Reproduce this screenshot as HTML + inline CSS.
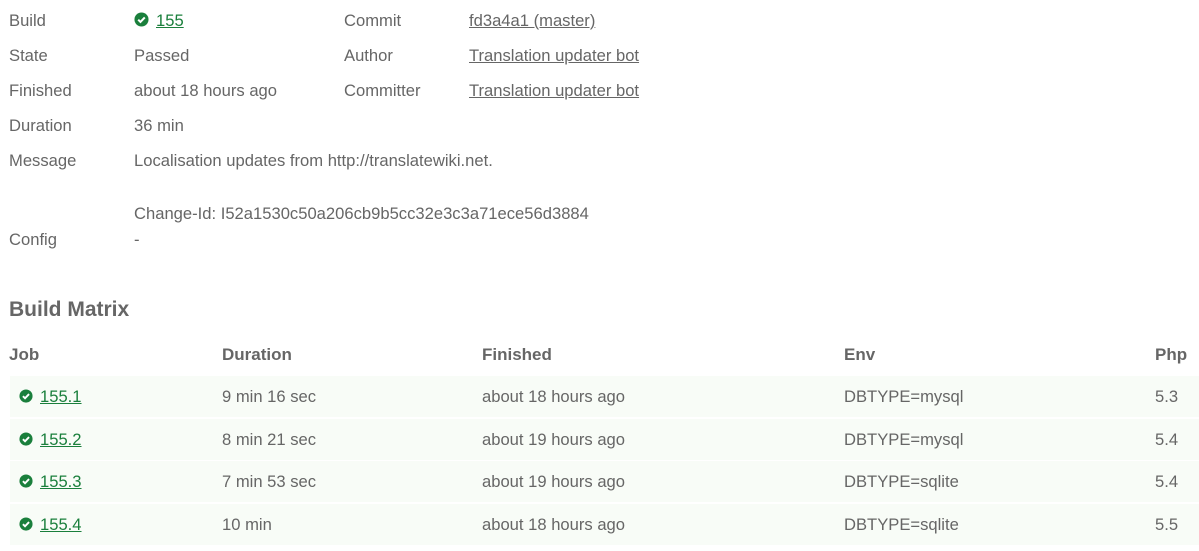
<!DOCTYPE html>
<html><head><meta charset="utf-8"><style>
body{margin:0;width:1199px;height:551px;background:#fff;font-family:"Liberation Sans",sans-serif;font-size:16.6px;color:#666;position:relative;overflow:hidden}
.t{position:absolute;line-height:18px;white-space:nowrap}
a{color:#666;text-decoration:underline}
a.g{color:#1a7f3c}
.b{font-weight:bold}
.row{position:absolute;left:10px;width:1189px;height:41px;background:#f8fcf7}
svg{position:absolute}
</style></head><body>
<div class="t" style="left:9px;top:12px">Build</div>
<svg style="left:134px;top:12px" width="15" height="15" viewBox="0 0 16 16"><circle cx="8" cy="8" r="7.5" fill="#1a7f3c"/><path d="M4.5 8.2l2.4 2.4 4.6-4.8" stroke="#fff" stroke-width="2.2" fill="none"/></svg>
<div class="t" style="left:156px;top:12px"><a class="g">155</a></div>
<div class="t" style="left:344px;top:12px">Commit</div>
<div class="t" style="left:469px;top:12px"><a>fd3a4a1 (master)</a></div>
<div class="t" style="left:9px;top:47px">State</div>
<div class="t" style="left:134px;top:47px">Passed</div>
<div class="t" style="left:344px;top:47px">Author</div>
<div class="t" style="left:469px;top:47px"><a>Translation updater bot</a></div>
<div class="t" style="left:9px;top:82px">Finished</div>
<div class="t" style="left:134px;top:82px">about 18 hours ago</div>
<div class="t" style="left:344px;top:82px">Committer</div>
<div class="t" style="left:469px;top:82px"><a>Translation updater bot</a></div>
<div class="t" style="left:9px;top:117px">Duration</div>
<div class="t" style="left:134px;top:117px">36 min</div>
<div class="t" style="left:9px;top:152px">Message</div>
<div class="t" style="left:134px;top:152px">Localisation updates from http://translatewiki.net.</div>
<div class="t" style="left:134px;top:205px">Change-Id: I52a1530c50a206cb9b5cc32e3c3a71ece56d3884</div>
<div class="t" style="left:9px;top:231px">Config</div>
<div class="t" style="left:134px;top:231px">-</div>
<div class="t b" style="left:9px;top:299px;font-size:21px;line-height:22px">Build Matrix</div>
<div class="t b" style="left:9px;top:346px;font-size:17px">Job</div>
<div class="t b" style="left:222px;top:346px;font-size:17px">Duration</div>
<div class="t b" style="left:482px;top:346px;font-size:17px">Finished</div>
<div class="t b" style="left:844px;top:346px;font-size:17px">Env</div>
<div class="t b" style="left:1155px;top:346px;font-size:17px">Php</div>

<div class="row" style="top:376px"></div>
<div class="row" style="top:419px"></div>
<div class="row" style="top:461px"></div>
<div class="row" style="top:504px"></div>

<svg style="left:19px;top:389px" width="14" height="14" viewBox="0 0 16 16"><circle cx="8" cy="8" r="7.5" fill="#1a7f3c"/><path d="M4.5 8.2l2.4 2.4 4.6-4.8" stroke="#fff" stroke-width="2.2" fill="none"/></svg>
<svg style="left:19px;top:432px" width="14" height="14" viewBox="0 0 16 16"><circle cx="8" cy="8" r="7.5" fill="#1a7f3c"/><path d="M4.5 8.2l2.4 2.4 4.6-4.8" stroke="#fff" stroke-width="2.2" fill="none"/></svg>
<svg style="left:19px;top:474px" width="14" height="14" viewBox="0 0 16 16"><circle cx="8" cy="8" r="7.5" fill="#1a7f3c"/><path d="M4.5 8.2l2.4 2.4 4.6-4.8" stroke="#fff" stroke-width="2.2" fill="none"/></svg>
<svg style="left:19px;top:517px" width="14" height="14" viewBox="0 0 16 16"><circle cx="8" cy="8" r="7.5" fill="#1a7f3c"/><path d="M4.5 8.2l2.4 2.4 4.6-4.8" stroke="#fff" stroke-width="2.2" fill="none"/></svg>

<div class="t" style="left:40px;top:388px"><a class="g">155.1</a></div>
<div class="t" style="left:222px;top:388px">9 min 16 sec</div>
<div class="t" style="left:482px;top:388px">about 18 hours ago</div>
<div class="t" style="left:844px;top:388px">DBTYPE=mysql</div>
<div class="t" style="left:1155px;top:388px">5.3</div>

<div class="t" style="left:40px;top:431px"><a class="g">155.2</a></div>
<div class="t" style="left:222px;top:431px">8 min 21 sec</div>
<div class="t" style="left:482px;top:431px">about 19 hours ago</div>
<div class="t" style="left:844px;top:431px">DBTYPE=mysql</div>
<div class="t" style="left:1155px;top:431px">5.4</div>

<div class="t" style="left:40px;top:473px"><a class="g">155.3</a></div>
<div class="t" style="left:222px;top:473px">7 min 53 sec</div>
<div class="t" style="left:482px;top:473px">about 19 hours ago</div>
<div class="t" style="left:844px;top:473px">DBTYPE=sqlite</div>
<div class="t" style="left:1155px;top:473px">5.4</div>

<div class="t" style="left:40px;top:516px"><a class="g">155.4</a></div>
<div class="t" style="left:222px;top:516px">10 min</div>
<div class="t" style="left:482px;top:516px">about 18 hours ago</div>
<div class="t" style="left:844px;top:516px">DBTYPE=sqlite</div>
<div class="t" style="left:1155px;top:516px">5.5</div>
</body></html>
